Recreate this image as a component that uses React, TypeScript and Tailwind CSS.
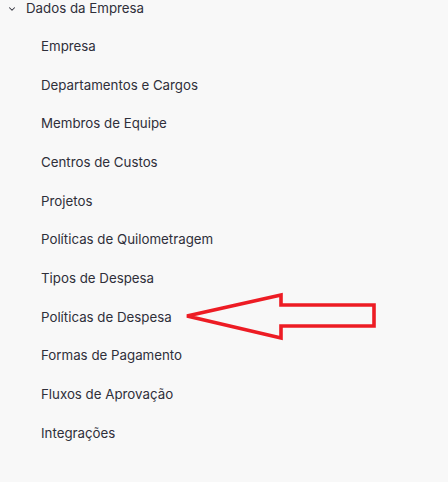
import { ChevronDown } from "lucide-react"

const items = [
  "Empresa",
  "Departamentos e Cargos",
  "Membros de Equipe",
  "Centros de Custos",
  "Projetos",
  "Políticas de Quilometragem",
  "Tipos de Despesa",
  "Políticas de Despesa",
  "Formas de Pagamento",
  "Fluxos de Aprovação",
  "Integrações",
]

export default function App() {
  return (
    <div
      className="relative w-[448px] h-[482px] bg-[#f8f8f8] text-[#2f2f3a] text-[13.3px] overflow-hidden"
      style={{ fontFamily: "Inter, 'Noto Sans', sans-serif" }}
    >
      {/* section header */}
      <div className="flex items-center h-[17px] pl-[7px]">
        <ChevronDown className="w-[10px] h-[10px] text-[#2f2f3a]" strokeWidth={2.5} />
        <span className="ml-[9px]">Dados da Empresa</span>
      </div>

      {/* sub items */}
      <ul className="mt-[10.5px] pl-[41px]">
        {items.map((label) => (
          <li key={label} className="h-[38.7px] flex items-center">
            {label}
          </li>
        ))}
      </ul>

      {/* annotation arrow */}
      <svg className="absolute left-0 top-0 pointer-events-none" width="448" height="482">
        <polygon
          points="187,316 281,295 281,305 374,305 374,326 281,326 281,338"
          fill="none"
          stroke="#ed1c24"
          strokeWidth="3.6"
          strokeLinejoin="miter"
        />
      </svg>
    </div>
  )
}
